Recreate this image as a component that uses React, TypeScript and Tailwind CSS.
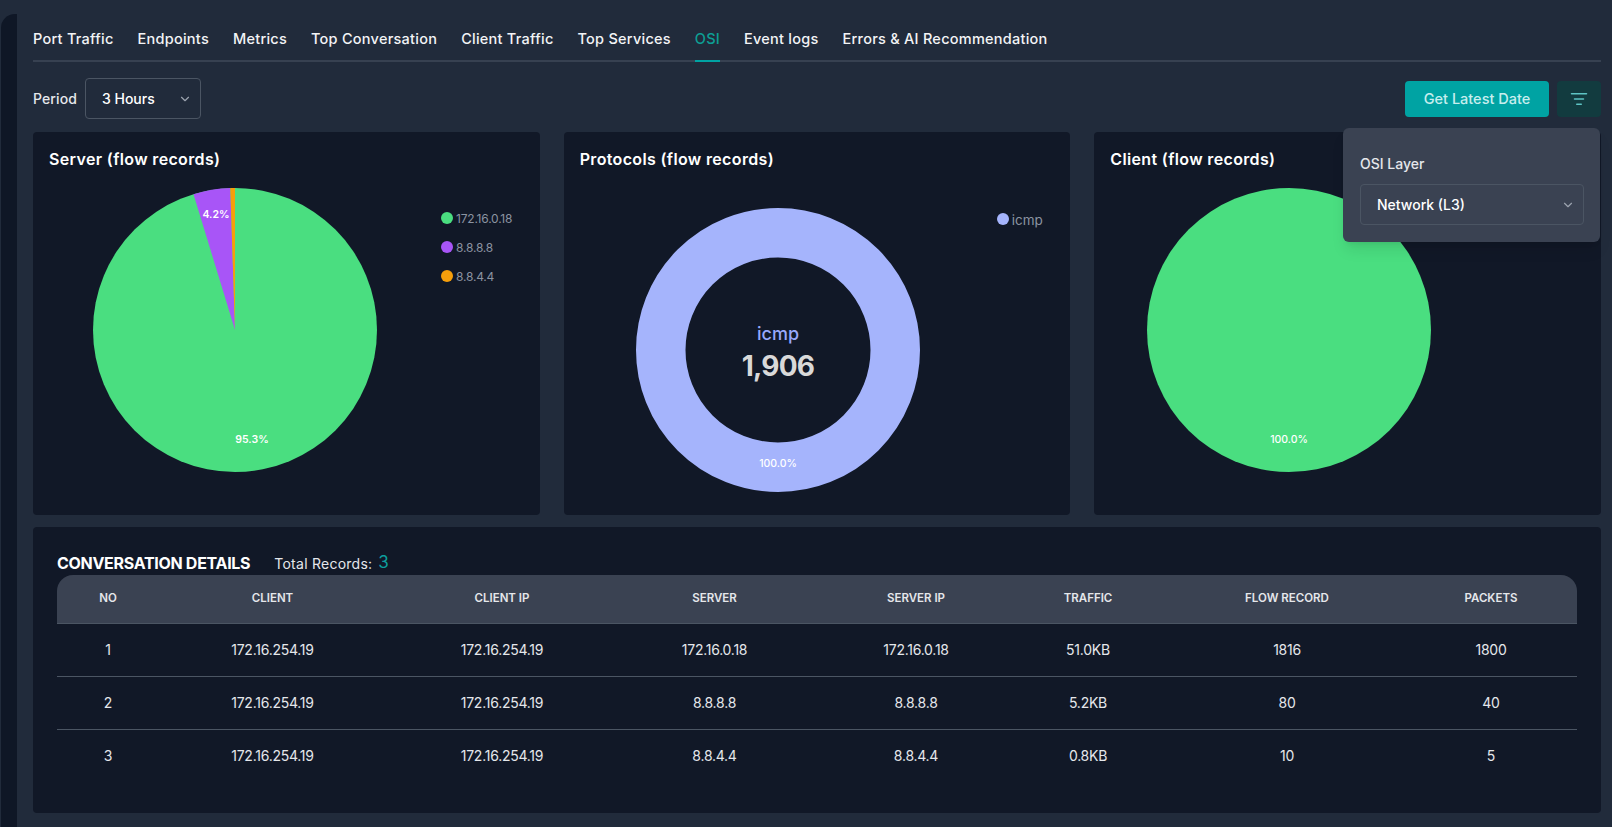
import { ChevronDown, ListFilter } from "lucide-react";

const tabs = [
    "Port Traffic",
    "Endpoints",
    "Metrics",
    "Top Conversation",
    "Client Traffic",
    "Top Services",
    "OSI",
    "Event logs",
    "Errors & AI Recommendation",
];

const columns = ["NO", "CLIENT", "CLIENT IP", "SERVER", "SERVER IP", "TRAFFIC", "FLOW RECORD", "PACKETS"];

const rows = [
    ["1", "172.16.254.19", "172.16.254.19", "172.16.0.18", "172.16.0.18", "51.0KB", "1816", "1800"],
    ["2", "172.16.254.19", "172.16.254.19", "8.8.8.8", "8.8.8.8", "5.2KB", "80", "40"],
    ["3", "172.16.254.19", "172.16.254.19", "8.8.4.4", "8.8.4.4", "0.8KB", "10", "5"],
];

const Legend = ({ color, label }: { color: string; label: string }) => (
    <div className="flex h-[12px] items-center gap-[3px] text-[12px] tracking-[-0.2px] text-[#8b93a1]">
        <span className={`h-3 w-3 rounded-full ${color}`} />
        <span className="mt-[2px]">{label}</span>
    </div>
);

const Card = ({ title, children }: { title: string; children: React.ReactNode }) => (
    <div className="h-[383px] rounded-[4px] bg-[#111827] pl-4 pt-[15px]">
        <h2 className="text-[16px] font-semibold leading-[24px] tracking-[0.35px] text-white">{title}</h2>
        {children}
    </div>
);

const App = () => {
    return (
        <div className="flex h-[827px] w-[1612px] overflow-hidden bg-[#212b3b] font-['Inter',sans-serif]">

            {/* SIDEBAR EDGE */}
            <div className="ml-[1px] mt-[14px] w-[16px] rounded-tl-[14px] bg-[#0f1726]" />

            {/* MAIN */}
            <div className="relative w-[1584px] pl-4 pt-[25px]">

                {/* TABS */}
                <div className="flex h-[37px] gap-6 border-b-2 border-[#374151] text-[14.5px] font-[450] tracking-[0.25px] text-[#f3f4f6]">
                    {tabs.map((tab) => (
                        <div
                            key={tab}
                            className={
                                tab === "OSI"
                                    ? "-mb-[2px] h-[37px] border-b-2 border-[#00a3a3] pt-[3px] text-[#0d9e94]"
                                    : "pt-[3px]"
                            }
                        >
                            {tab}
                        </div>
                    ))}
                </div>

                {/* TOOLBAR */}
                <div className="mt-[16px] flex h-[41px] items-center text-[14px] font-[450] text-white">
                    <span className="mr-2 tracking-[0.1px] text-[#e5e7eb]">Period</span>
                    <div className="flex h-[41px] w-[116px] items-center justify-between rounded-[4px] border border-[#4b5563] pl-4 pr-2">
                        <span>3 Hours</span>
                        <ChevronDown size={14} className="text-[#9ca3af]" />
                    </div>
                    <button className="ml-auto h-9 w-[144px] rounded-[4px] bg-[#00a3a3] text-[14.5px] text-[#c7eeee]">
                        Get Latest Date
                    </button>
                    <button className="ml-2 flex h-9 w-[44px] items-center justify-center rounded-[4px] bg-[#123b3f] text-[#5ec4c4]">
                        <ListFilter size={18} />
                    </button>
                </div>

                {/* OSI POPOVER */}
                <div className="absolute left-[1326px] top-[128px] z-10 h-[114px] w-[257px] rounded-[6px] bg-[#3a4252] pl-[17px] pr-4 pt-[24px] shadow-lg">
                    <p className="text-[14px] font-[450] leading-[24px] text-[#e5e7eb]">OSI Layer</p>
                    <div className="mt-2 flex h-[41px] items-center justify-between rounded-[4px] border border-[#4b5563] pl-4 pr-2 text-[14px] font-[450] text-white">
                        <span>Network (L3)</span>
                        <ChevronDown size={14} className="text-[#9ca3af]" />
                    </div>
                </div>

                {/* CHARTS */}
                <div className="mt-[13px] grid grid-cols-3 gap-6">

                    <Card title="Server (flow records)">
                        <div className="mt-[17px] flex">
                            <svg viewBox="0 0 284 284" className="ml-[44px] h-[284px] w-[284px]">
                                <circle cx="142" cy="142" r="142" fill="#4ade80" />
                                <path d="M142 142 L100.5 6.2 A142 142 0 0 1 137.3 0.1 Z" fill="#a855f7" />
                                <path d="M142 142 L137.3 0.1 A142 142 0 0 1 142 0 Z" fill="#f59e0b" />
                                <text x="123" y="30" textAnchor="middle" fill="#fff" fontSize="10.5" fontWeight="600">4.2%</text>
                                <text x="159" y="255" textAnchor="middle" fill="#fff" fontSize="10.5" fontWeight="600">95.3%</text>
                            </svg>
                            <div className="ml-[64px] mt-[24px] flex flex-col gap-[17px]">
                                <Legend color="bg-[#4ade80]" label="172.16.0.18" />
                                <Legend color="bg-[#a855f7]" label="8.8.8.8" />
                                <Legend color="bg-[#f59e0b]" label="8.8.4.4" />
                            </div>
                        </div>
                    </Card>

                    <Card title="Protocols (flow records)">
                        <div className="mt-[37px] flex">
                            <svg viewBox="0 0 284 284" className="ml-[56px] h-[284px] w-[284px]">
                                <circle cx="142" cy="142" r="117.25" fill="none" stroke="#a5b4fc" strokeWidth="49.5" />
                                <text x="142" y="132" textAnchor="middle" fill="#98a8fc" fontSize="18" fontWeight="500">icmp</text>
                                <text x="142" y="168" textAnchor="middle" fill="#d9d9d9" fontSize="28" fontWeight="700" letterSpacing="-0.8">1,906</text>
                                <text x="142" y="259" textAnchor="middle" fill="#fff" fontSize="10.5" fontWeight="500">100.0%</text>
                            </svg>
                            <div className="ml-[77px] mt-[5px] [&_span:last-child]:text-[13.5px] [&_span:last-child]:tracking-normal">
                                <Legend color="bg-[#a5b4fc]" label="icmp" />
                            </div>
                        </div>
                    </Card>

                    <Card title="Client (flow records)">
                        <div className="mt-[17px] flex">
                            <svg viewBox="0 0 284 284" className="ml-[37px] h-[284px] w-[284px]">
                                <circle cx="142" cy="142" r="142" fill="#4ade80" />
                                <text x="142" y="255" textAnchor="middle" fill="#fff" fontSize="10.5" fontWeight="500">100.0%</text>
                            </svg>
                        </div>
                    </Card>

                </div>

                {/* CONVERSATION DETAILS */}
                <div className="mt-3 h-[286px] rounded-[4px] bg-[#111827] px-6 pt-6">

                    <div className="flex h-[24px] items-center">
                        <h2 className="text-[16px] font-bold tracking-[-0.3px] text-white">CONVERSATION DETAILS</h2>
                        <span className="ml-6 text-[14px] font-normal tracking-[0.25px] text-[#e5e7eb]">Total Records:</span>
                        <span className="ml-[6px] text-[17px] text-[#0d9e9e]">3</span>
                    </div>

                    <table className="w-full table-fixed text-center text-[14px] tracking-[-0.25px] text-[#e5e7eb]">
                        <colgroup>
                            <col className="w-[102px]" />
                            <col className="w-[227px]" />
                            <col className="w-[232px]" />
                            <col className="w-[193px]" />
                            <col className="w-[210px]" />
                            <col className="w-[134px]" />
                            <col className="w-[264px]" />
                            <col className="w-[158px]" />
                        </colgroup>
                        <thead>
                            <tr className="h-[48px] border-b border-[#4b5563] bg-[#3a4252] text-[11.5px] text-[#e5e7eb]">
                                {columns.map((column, i) => (
                                    <th
                                        key={column}
                                        className={
                                            i === 0
                                                ? "rounded-tl-[16px] font-semibold tracking-normal"
                                                : i === columns.length - 1
                                                  ? "rounded-tr-[16px] pr-[14px] font-semibold tracking-normal"
                                                  : "font-semibold tracking-normal"
                                        }
                                    >
                                        {column}
                                    </th>
                                ))}
                            </tr>
                        </thead>
                        <tbody>
                            {rows.map((row, i) => (
                                <tr key={row[0]} className={i < 2 ? "h-[53px] border-b border-[#4b5563]" : "h-[53px]"}>
                                    {row.map((cell, j) => (
                                        <td key={j} className={j === 7 ? "pr-[14px]" : ""}>{cell}</td>
                                    ))}
                                </tr>
                            ))}
                        </tbody>
                    </table>

                </div>

            </div>
        </div>
    );
};

export default App;
